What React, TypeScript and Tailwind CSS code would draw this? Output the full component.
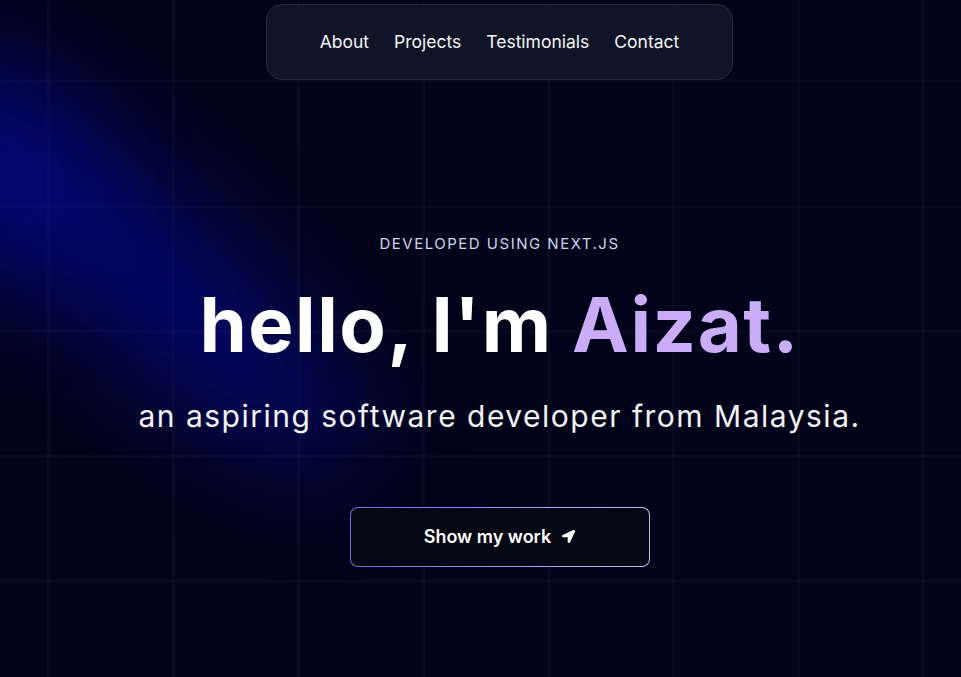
import React from 'react';
import { FaLocationArrow } from 'react-icons/fa';

const navItems = ['About', 'Projects', 'Testimonials', 'Contact'];

export default function App() {
    return (
        <div
            className="relative h-[677px] w-full overflow-hidden bg-[#000319] font-['Inter',sans-serif] text-white"
        >
            {/* grid */}
            <div
                className="absolute inset-0 bg-[linear-gradient(to_right,rgba(255,255,255,0.028)_3px,transparent_3px),linear-gradient(to_bottom,rgba(255,255,255,0.028)_3px,transparent_3px)] bg-[size:125px_125px] bg-[position:47px_80px]"
            />
            {/* spotlight */}
            <div className="absolute left-[-170px] top-[185px] h-[150px] w-[600px] rotate-[42deg] rounded-[50%] bg-[#0a0aa0] opacity-60 blur-[55px]" />
            <div className="absolute left-[-130px] top-[100px] h-[180px] w-[210px] rounded-[50%] bg-[#08089a] opacity-50 blur-[60px]" />

            <div className="relative flex flex-col items-center pl-[38px]">
                <nav className="mt-[4px] flex h-[76px] w-[467px] items-center justify-center gap-[25px] rounded-2xl border border-[#262b3d] bg-[#0f1427] text-[17.5px] text-[#f3f4f8]">
                    {navItems.map((item) => (
                        <span key={item}>{item}</span>
                    ))}
                </nav>

                <p className="mt-[153px] text-[15px] uppercase tracking-[0.1em] text-[#d0d5ee]">
                    Developed using Next.js
                </p>
                <h1 className="mt-[30px] text-[76px] font-bold leading-none tracking-[0.02em]">
                    hello, I'm <span className="text-[#cbacf9]">Aizat.</span>
                </h1>
                <p className="mt-[32px] text-[30px] tracking-[0.05em] text-[#f1f2f6]">
                    an aspiring software developer from Malaysia.
                </p>

                <div className="mt-[68px] rounded-lg bg-[linear-gradient(100deg,#6f67dc,#a89cf0_60%,#cbb8fb)] p-px">
                    <button className="flex h-[58px] w-[298px] items-center justify-center gap-[11px] rounded-[7px] bg-[#050714] text-[18px] font-semibold">
                        Show my work
                        <FaLocationArrow className="h-[13px] w-[13px]" />
                    </button>
                </div>
            </div>
        </div>
    );
}
